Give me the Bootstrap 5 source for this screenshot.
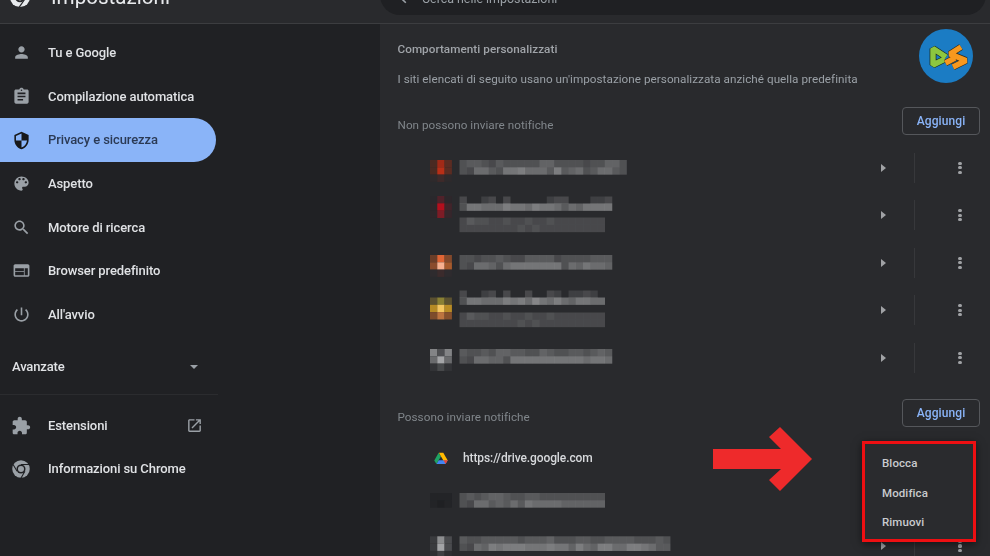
<!DOCTYPE html>
<html lang="it">
<head>
<meta charset="utf-8">
<title>Impostazioni</title>
<link href="https://cdn.jsdelivr.net/npm/bootstrap@5.3.0/dist/css/bootstrap.min.css" rel="stylesheet">
<style>
html,body{height:556px;overflow:hidden}
body{background:#202124;font-family:Roboto,"Liberation Sans",sans-serif;color:#e8eaed;position:relative}
.shot{height:556px;filter:blur(.45px)}
.topbar{height:48px;margin-top:-24px;background:#292a2d;border-bottom:1px solid #3c3d40;flex:none}
.brand-zone{width:380px;padding:0 0 5px 9px;gap:20px}
.brand-zone span{font-size:20.6px;color:#e8eaed;line-height:1}
.searchbox{flex:1;height:40px;margin:0 4px 8px 0;border-radius:20px;background:#1f2023;padding:8px 0 0 11px;gap:13px;font-size:12.4px;color:#9aa0a6}
.searchbox svg{margin-bottom:4px}
.side{width:380px;flex:none;padding-top:7.2px;background:#202124}
.side-link{height:43.6px;width:216px;padding:0 0 0 11.5px;gap:17.5px;font-size:13px;font-weight:500;color:#e0e2e5;border-radius:0 22px 22px 0;letter-spacing:-.1px}
.side-link svg{fill:#9aa0a6;flex:none;width:19px;height:19px}
.side-link svg.wide-glyph{width:20px;height:20px;margin:0 -.5px}
.side-link.on{background:#8ab4f8;color:#2b3a55}
.side-link.on svg{fill:#17181a}
.adv{height:51px;width:216px;padding:10px 18px 0 12px;font-size:13px;font-weight:500;color:#e0e2e5;letter-spacing:-.15px}
.caret-mini{width:0;height:0;border:4.5px solid transparent;border-top:4.5px solid #9aa0a6;border-bottom:0}
.rule-line{width:218px;height:1px;background:#2b2c2f;margin:7px 0 8.5px}
.side-link svg.ext-icon{margin-left:auto;margin-right:13px;width:17px;height:17px}
.pane{flex:1;background:#292a2d;padding:0 10px 0 17.5px;min-width:0}
.pane-title{height:17px;margin-top:17px;font-size:11.7px;font-weight:500;color:#a0a4a9;line-height:17px;letter-spacing:.06px}
.pane-desc{margin-top:13px;height:17px;font-size:11.7px;line-height:17px;color:#9aa0a6;letter-spacing:.04px}
.sect-head{height:28px;font-size:11.7px;color:#80868b;letter-spacing:.04px}
.sect-head .head-label{margin-top:10px}
.sect-a{margin-top:19px}
.sect-b{margin-top:17px}
.add-btn{width:78px;height:28px;padding:0;font-size:12px;font-weight:500;color:#8ab4f8;border:1px solid #55575b;border-radius:4px;background:transparent;--bs-btn-hover-color:#8ab4f8;letter-spacing:.1px}
.site-list{margin-top:9px}
.site-list.near{margin-top:10px}
.site-row{height:47.5px;padding:0;background:transparent;border:0}
.site-row.low{height:43.8px}
.blur-strip{flex:none;margin-left:32px;display:block;filter:blur(.5px)}
.tri{margin-left:auto;width:0;height:0;border:4px solid transparent;border-left:5.5px solid #a0a2a5;border-right:0}
.vsep{width:1px;height:30px;background:#37383b;margin:0 43px 0 28px}
.dots{width:4px;display:flex;flex-direction:column;align-items:center;gap:1.4px;margin-right:18px}
.dots i{width:3.2px;height:3.2px;border-radius:50%;background:#a0a2a5}
.site-url{margin-left:36.5px;gap:15px;font-size:12px;font-weight:500;color:#d7d9dc;letter-spacing:-.1px}
.red-arrow{position:absolute;left:713px;top:427px}
.logo-badge{position:absolute;left:919px;top:29px}
.ctx-menu{position:absolute;display:block;left:862px;top:441px;width:114px;height:101px;min-width:0;padding:0;background:#2a2b2e;border:3px solid #ee0f12;border-radius:0;box-shadow:0 2px 8px #0008}
.ctx-menu .dropdown-item{height:29.2px;padding:0 0 0 17px;margin-top:0;display:flex;align-items:center;font-size:11.5px;font-weight:500;color:#c9cbce;letter-spacing:.1px}
.ctx-menu li:first-child{margin-top:5.5px}
</style>
</head>
<body>
<div class="shot d-flex flex-column">
  <header class="topbar d-flex align-items-end">
    <div class="brand-zone d-flex align-items-center h-100">
      <svg width="22" height="22" viewBox="0 0 24 24"><circle cx="12" cy="12" r="11" fill="#e8eaed"/><circle cx="12" cy="12" r="5.6" fill="#292a2d"/><circle cx="12" cy="12" r="3.8" fill="#e8eaed"/><path d="M12 6.4h10M7.2 15L2.6 6.5M16.8 15 11 23.2" stroke="#292a2d" stroke-width="1.4"/></svg>
      <span>Impostazioni</span>
    </div>
    <div class="searchbox d-flex align-items-center">
      <svg width="18" height="18" viewBox="0 0 24 24" fill="#9aa0a6"><path d="M15.5 14h-.79l-.28-.27C15.41 12.59 16 11.11 16 9.5 16 5.91 13.09 3 9.5 3S3 5.91 3 9.5 5.91 16 9.5 16c1.61 0 3.09-.59 4.23-1.57l.27.28v.79l5 4.99L20.49 19l-4.99-5zm-6 0C7.01 14 5 11.99 5 9.5S7.01 5 9.5 5 14 7.01 14 9.5 11.99 14 9.5 14z"/></svg>
      <span>Cerca nelle impostazioni</span>
    </div>
  </header>
  <div class="d-flex flex-grow-1 overflow-hidden">
    <nav class="side nav flex-column flex-nowrap">
      <a class="side-link nav-link d-flex align-items-center" href="#"><svg viewBox="0 0 24 24"><path d="M12 12c2.21 0 4-1.79 4-4s-1.79-4-4-4-4 1.79-4 4 1.79 4 4 4zm0 2c-2.67 0-8 1.34-8 4v2h16v-2c0-2.66-5.33-4-8-4z"/></svg>Tu e Google</a>
      <a class="side-link nav-link d-flex align-items-center" href="#"><svg viewBox="0 0 24 24"><path d="M19 3h-4.18C14.4 1.84 13.3 1 12 1c-1.3 0-2.4.84-2.82 2H5c-1.1 0-2 .9-2 2v14c0 1.1.9 2 2 2h14c1.1 0 2-.9 2-2V5c0-1.1-.9-2-2-2zm-7 0c.55 0 1 .45 1 1s-.45 1-1 1-1-.45-1-1 .45-1 1-1zm2 14H7v-2h7v2zm3-4H7v-2h10v2zm0-4H7V7h10v2z"/></svg>Compilazione automatica</a>
      <a class="side-link on nav-link d-flex align-items-center" href="#"><svg viewBox="0 0 24 24"><path d="M12 1L3 5v6c0 5.55 3.84 10.74 9 12 5.16-1.26 9-6.45 9-12V5l-9-4zm0 10.99h7c-.53 4.12-3.28 7.79-7 8.94V12H5V6.3l7-3.11v8.8z"/></svg>Privacy e sicurezza</a>
      <a class="side-link nav-link d-flex align-items-center" href="#"><svg viewBox="0 0 24 24"><path d="M12 3c-4.97 0-9 4.03-9 9s4.03 9 9 9c.83 0 1.5-.67 1.5-1.5 0-.39-.15-.74-.39-1.01-.23-.26-.38-.61-.38-.99 0-.83.67-1.5 1.5-1.5H16c2.76 0 5-2.24 5-5 0-4.42-4.03-8-9-8zm-5.5 9c-.83 0-1.5-.67-1.5-1.5S5.67 9 6.5 9 8 9.67 8 10.5 7.33 12 6.5 12zm3-4C8.67 8 8 7.33 8 6.5S8.67 5 9.5 5s1.5.67 1.5 1.5S10.33 8 9.5 8zm5 0c-.83 0-1.5-.67-1.5-1.5S13.67 5 14.5 5s1.5.67 1.5 1.5S15.33 8 14.5 8zm3 4c-.83 0-1.5-.67-1.5-1.5S16.67 9 17.5 9s1.5.67 1.5 1.5-.67 1.5-1.5 1.5z"/></svg>Aspetto</a>
      <a class="side-link nav-link d-flex align-items-center" href="#"><svg viewBox="0 0 24 24"><path d="M15.5 14h-.79l-.28-.27C15.41 12.59 16 11.11 16 9.5 16 5.91 13.09 3 9.5 3S3 5.91 3 9.5 5.91 16 9.5 16c1.61 0 3.09-.59 4.23-1.57l.27.28v.79l5 4.99L20.49 19l-4.99-5zm-6 0C7.01 14 5 11.99 5 9.5S7.01 5 9.5 5 14 7.01 14 9.5 11.99 14 9.5 14z"/></svg>Motore di ricerca</a>
      <a class="side-link nav-link d-flex align-items-center" href="#"><svg viewBox="0 0 24 24"><path d="M20 4H4c-1.1 0-1.99.9-1.99 2L2 18c0 1.1.9 2 2 2h16c1.1 0 2-.9 2-2V6c0-1.1-.9-2-2-2zm-5 14H4v-4h11v4zm0-5H4V9h11v4zm5 5h-4V9h4v9z"/></svg>Browser predefinito</a>
      <a class="side-link nav-link d-flex align-items-center" href="#"><svg viewBox="0 0 24 24"><path d="M13 3h-2v10h2V3zm4.83 2.17l-1.42 1.42C17.99 7.86 19 9.81 19 12c0 3.87-3.13 7-7 7s-7-3.13-7-7c0-2.19 1.01-4.14 2.58-5.42L6.17 5.17C4.23 6.82 3 9.26 3 12c0 4.97 4.03 9 9 9s9-4.03 9-9c0-2.74-1.23-5.18-3.17-6.83z"/></svg>All'avvio</a>
      <div class="adv d-flex align-items-center justify-content-between"><span>Avanzate</span><span class="caret-mini"></span></div>
      <div class="rule-line"></div>
      <a class="side-link nav-link d-flex align-items-center" href="#"><svg class="wide-glyph" viewBox="0 0 24 24"><path d="M20.5 11H19V7c0-1.1-.9-2-2-2h-4V3.5C13 2.12 11.88 1 10.5 1S8 2.12 8 3.5V5H4c-1.1 0-1.99.9-1.99 2v3.8H3.5c1.49 0 2.7 1.21 2.7 2.7s-1.21 2.7-2.7 2.7H2V20c0 1.1.9 2 2 2h3.8v-1.5c0-1.49 1.21-2.7 2.7-2.7 1.49 0 2.7 1.21 2.7 2.7V22H17c1.1 0 2-.9 2-2v-4h1.5c1.38 0 2.5-1.12 2.5-2.5S21.88 11 20.5 11z"/></svg>Estensioni<svg class="ext-icon" viewBox="0 0 24 24"><path d="M19 19H5V5h7V3H5c-1.11 0-2 .9-2 2v14c0 1.1.89 2 2 2h14c1.1 0 2-.9 2-2v-7h-2v7zM14 3v2h3.59l-9.83 9.83 1.41 1.41L19 6.41V10h2V3h-7z"/></svg></a>
      <a class="side-link nav-link d-flex align-items-center" href="#"><svg class="wide-glyph" viewBox="0 0 24 24"><circle cx="12" cy="12" r="10.5"/><circle cx="12" cy="12" r="5.4" fill="#202124"/><circle cx="12" cy="12" r="3.6"/><path d="M12 6.6h10M7.3 14.7 2.5 6.6M16.7 14.7l-5 8.6" stroke="#202124" stroke-width="1.3"/></svg>Informazioni su Chrome</a>
    </nav>
    <main class="pane">
      <div class="pane-title">Comportamenti personalizzati</div>
      <div class="pane-desc">I siti elencati di seguito usano un'impostazione personalizzata anziché quella predefinita</div>
      <div class="sect-head sect-a d-flex align-items-center justify-content-between"><span class="head-label">Non possono inviare notifiche</span><button type="button" class="btn add-btn">Aggiungi</button></div>
      <ul class="site-list list-group list-group-flush">
        <li class="site-row list-group-item d-flex align-items-center"><svg class="blur-strip" width="250" height="44" data-spec="0"></svg><span class="tri"></span><span class="vsep"></span><span class="dots"><i></i><i></i><i></i></span></li>
        <li class="site-row list-group-item d-flex align-items-center"><svg class="blur-strip" width="250" height="44" data-spec="1"></svg><span class="tri"></span><span class="vsep"></span><span class="dots"><i></i><i></i><i></i></span></li>
        <li class="site-row list-group-item d-flex align-items-center"><svg class="blur-strip" width="250" height="44" data-spec="2"></svg><span class="tri"></span><span class="vsep"></span><span class="dots"><i></i><i></i><i></i></span></li>
        <li class="site-row list-group-item d-flex align-items-center"><svg class="blur-strip" width="250" height="44" data-spec="3"></svg><span class="tri"></span><span class="vsep"></span><span class="dots"><i></i><i></i><i></i></span></li>
        <li class="site-row list-group-item d-flex align-items-center"><svg class="blur-strip" width="250" height="44" data-spec="4"></svg><span class="tri"></span><span class="vsep"></span><span class="dots"><i></i><i></i><i></i></span></li>
      </ul>
      <div class="sect-head sect-b d-flex align-items-center justify-content-between"><span class="head-label">Possono inviare notifiche</span><button type="button" class="btn add-btn">Aggiungi</button></div>
      <ul class="site-list near list-group list-group-flush">
        <li class="site-row low list-group-item d-flex align-items-center"><div class="site-url d-flex align-items-center"><svg width="14" height="13" viewBox="0 0 16 14"><path d="M5.3.5 .3 9.2l2.5 4.2 5.1-8.7z" fill="#1fa463"/><path d="M2.9 13.4h10.2l2.6-4.4H5.4z" fill="#4285f4"/><path d="M10.6.5H5.6l5.1 8.8h5z" fill="#ffba00"/><path d="M11 9.1l2.2 4.3 2.6-4.4z" fill="#ea4335"/></svg><span>https://drive.google.com</span></div></li>
        <li class="site-row low list-group-item d-flex align-items-center"><svg class="blur-strip" width="250" height="44" data-spec="5"></svg></li>
        <li class="site-row low list-group-item d-flex align-items-center"><svg class="blur-strip" width="250" height="44" data-spec="6"></svg><span class="tri"></span><span class="vsep"></span><span class="dots"><i></i><i></i><i></i></span></li>
      </ul>
    </main>
  </div>
</div>

<svg class="red-arrow" width="100" height="64" viewBox="713 427 100 64"><polygon points="713,449 781,449 769,437 780,427 812,459 780,491 769,480 781,469 713,469" fill="#ee2a2b"/></svg>

<svg class="logo-badge" width="54" height="54" viewBox="0 0 54 54">
  <circle cx="27" cy="27" r="27" fill="#1b7cc4"/>
  <path d="M27 28 14 19.5V36l12-6" fill="none" stroke="#1a2a20" stroke-width="6.8" stroke-linejoin="bevel"/>
  <path d="M27 28 14 19.5V36l12-6" fill="none" stroke="#8dc63f" stroke-width="5.4" stroke-linejoin="bevel"/>
  <path d="M42 18 31 25l16 6.5L34 38M26.5 34 36 29" fill="none" stroke="#33291a" stroke-width="6.8" stroke-linejoin="bevel"/>
  <path d="M42 18 31 25l16 6.5L34 38M26.5 34 36 29" fill="none" stroke="#f7981e" stroke-width="5.4" stroke-linejoin="bevel"/>
</svg>

<ul class="ctx-menu dropdown-menu show list-unstyled">
  <li><a class="dropdown-item" href="#">Blocca</a></li>
  <li><a class="dropdown-item" href="#">Modifica</a></li>
  <li><a class="dropdown-item" href="#">Rimuovi</a></li>
</ul>

<script>
(function(){
  var c=7.27, s=30, ns='http://www.w3.org/2000/svg';
  var specs=[
   {l:[[14,'34432433333553333233553'],[21.3,'32664377866648456346643']],
    f:[[14,['#4a2a22','#a12a17','#5b2c22']],[21.3,['#4a2a22','#b92f17','#5b2c22']],[28.6,['#2e2a2c','#3e2a2a','#2e2a2c']]]},
   {l:[[3.5,'200120200000122000112'],[10.5,'377666877687764657777'],[24.5,'24332232232232222222'],[31.8,'22222222323222222222']],
    f:[[3,['#29282c','#50222a','#2d272b']],[10.3,['#2e272b','#b40f1d','#42242a']],[17.6,['#2e272b','#7d1c26','#36262b']]]},
   {l:[[14,'332334322444423333444'],[21.3,'326653677777773657665']],
    f:[[14,['#6a3d28','#df6535','#83492b']],[21.3,['#8a4b2c','#f7b08f','#a65a2c']],[28.6,['#2e2b2e','#3b2b2c','#2e2b2e']]]},
   {l:[[2.5,'20012020020021011210'],[9.5,'37766687869768657766'],[24.5,'24332232232232222222'],[31.8,'22222222323222222222']],
    f:[[9.5,['#5a5030','#8a8034','#5c5230']],[16.8,['#b58a25','#f4c660','#b98c25']],[24.1,['#7d4c2c','#bd7440','#86502c']]]},
   {l:[[13,'433435544335433443454'],[20.3,'326655377777777776776']],
    f:[[13,['#838486','#4e4f52','#838486']],[20.3,['#6a6b6d','#a5a6a8','#6a6b6d']],[27.6,['#333437','#484a4c','#333437']]]},
   {l:[[13,'34345543344333333333'],[20.3,'32664546476666555555']],
    f:[[13,['#232427','#232427','#232427']],[20.3,['#232427','#1f2023','#232427']]]},
   {l:[[12.3,'43344444344453334433444433343'],[19.6,'32658788877787758658866887644']],
    f:[[12.3,['#3a3b3e','#8d8e90','#4a4b4e']],[19.6,['#3a3b3e','#a3a4a6','#4a4b4e']],[26.9,['#2e2f32','#3f4043','#2e2f32']]]}
  ];
  function rect(svg,x,y,w,h,fill){var r=document.createElementNS(ns,'rect');r.setAttribute('x',x);r.setAttribute('y',y);r.setAttribute('width',w);r.setAttribute('height',h);r.setAttribute('fill',fill);svg.appendChild(r);}
  document.querySelectorAll('svg[data-spec]').forEach(function(svg){
    var sp=specs[+svg.dataset.spec];
    sp.f.forEach(function(row){row[1].forEach(function(col,i){rect(svg,i*c,row[0],c+.1,c+.1,col);});});
    sp.l.forEach(function(row){row[1].split('').forEach(function(h,i){
      var v=parseInt(h,16); if(!v) return;
      var a=(v+1.5)/15*.62;
      rect(svg,s-.5+i*c,row[0],c+.1,c+.1,'rgba(255,255,255,'+a.toFixed(3)+')');
    });});
  });
})();
</script>
<script src="https://cdn.jsdelivr.net/npm/bootstrap@5.3.0/dist/js/bootstrap.bundle.min.js"></script>
</body>
</html>
